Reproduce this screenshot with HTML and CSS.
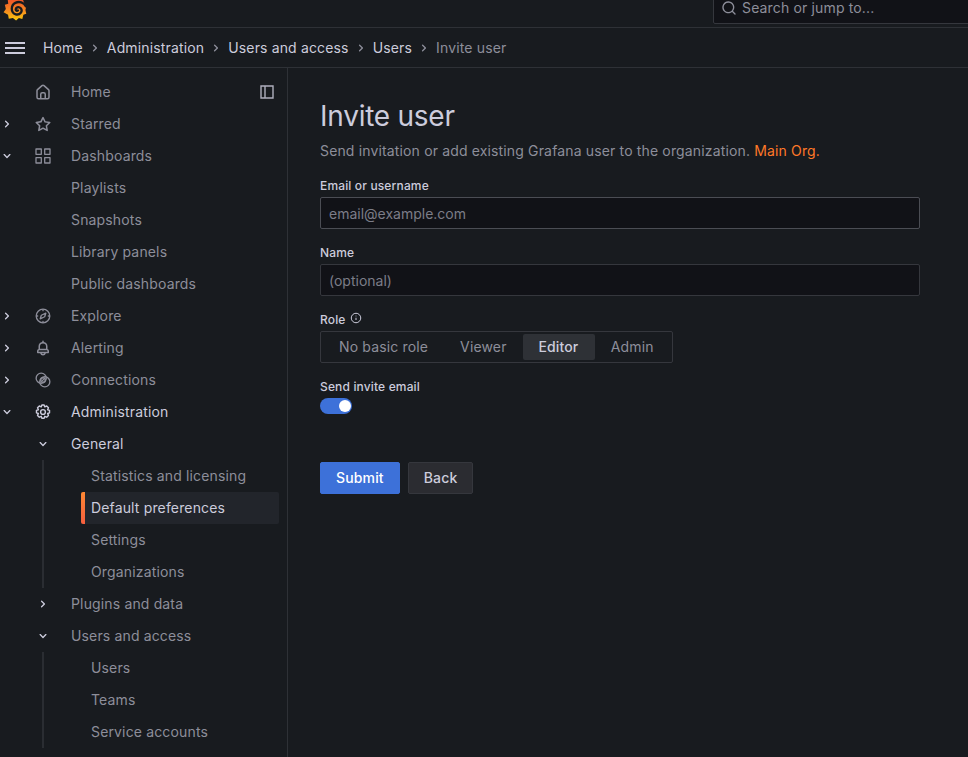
FILE: index.html
```html
<!DOCTYPE html>
<html lang="en">
<head>
<meta charset="utf-8">
<title>Invite user</title>
<link rel="stylesheet" href="styles.css">
</head>
<body>
<svg class="sprite" aria-hidden="true">
  <symbol id="right" viewBox="0 0 24 24"><path d="M14.83,11.29,10.59,7.05a1,1,0,0,0-1.42,0,1,1,0,0,0,0,1.41L12.71,12,9.17,15.54a1,1,0,0,0,0,1.41,1,1,0,0,0,.71.29,1,1,0,0,0,.71-.29l4.24-4.24A1,1,0,0,0,14.83,11.29Z"/></symbol>
  <symbol id="down" viewBox="0 0 24 24"><path d="M17,9.17a1,1,0,0,0-1.41,0L12,12.71,8.46,9.17a1,1,0,0,0-1.41,0,1,1,0,0,0,0,1.42l4.24,4.24a1,1,0,0,0,1.42,0L17,10.59A1,1,0,0,0,17,9.17Z"/></symbol>
  <symbol id="home" viewBox="0 0 24 24"><path d="M20,8h0L14,2.74a3,3,0,0,0-4,0L4,8a3,3,0,0,0-1,2.26V19a3,3,0,0,0,3,3H18a3,3,0,0,0,3-3V10.25A3,3,0,0,0,20,8ZM14,20H10V15a1,1,0,0,1,1-1h2a1,1,0,0,1,1,1Zm5-1a1,1,0,0,1-1,1H16V15a3,3,0,0,0-3-3H11a3,3,0,0,0-3,3v5H6a1,1,0,0,1-1-1V10.25a1,1,0,0,1,.34-.75l6-5.25a1,1,0,0,1,1.32,0l6,5.25a1,1,0,0,1,.34.75Z"/></symbol>
  <symbol id="star" viewBox="0 0 24 24"><path d="M22,9.67A1,1,0,0,0,21.14,9l-5.69-.83L12.9,3a1,1,0,0,0-1.8,0L8.55,8.16,2.86,9a1,1,0,0,0-.81.68,1,1,0,0,0,.25,1l4.13,4-1,5.68A1,1,0,0,0,6.9,21.44L12,18.77l5.1,2.67a.93.93,0,0,0,.46.12,1,1,0,0,0,.59-.19,1,1,0,0,0,.4-1l-1-5.68,4.13-4A1,1,0,0,0,22,9.67Zm-6.15,4a1,1,0,0,0-.29.88l.72,4.2-3.76-2a1.06,1.06,0,0,0-.94,0l-3.76,2,.72-4.2a1,1,0,0,0-.29-.88l-3-3,4.21-.61a1,1,0,0,0,.76-.55L12,5.7l1.88,3.82a1,1,0,0,0,.76.55l4.21.61Z"/></symbol>
  <symbol id="apps" viewBox="0 0 16 16"><path fill="none" stroke="currentColor" stroke-width="1.3" stroke-linejoin="round" d="M1 1h5.300v5.300H1zM9.700 1H15v5.300H9.700zM1 9.700h5.300V15H1zM9.700 9.700H15V15H9.700z"/></symbol>
  <symbol id="compass" viewBox="0 0 24 24"><g fill="none" stroke="currentColor" stroke-width="2" stroke-linecap="round" stroke-linejoin="round"><circle cx="12" cy="12" r="10.2"/><path d="M16.2 7.8l-1.7 5.3-6.7 3.1 1.7-5.3zM12 2.5v1.5M12 20v1.5M2.5 12H4M20 12h1.5"/></g></symbol>
  <symbol id="bell" viewBox="0 0 24 24"><path d="M18,13.18V10a6,6,0,0,0-5-5.91V3a1,1,0,0,0-2,0V4.09A6,6,0,0,0,6,10v3.18A3,3,0,0,0,4,16v2a1,1,0,0,0,1,1H8.14a4,4,0,0,0,7.72,0H19a1,1,0,0,0,1-1V16A3,3,0,0,0,18,13.18ZM8,10a4,4,0,0,1,8,0v3H8Zm4,10a2,2,0,0,1-1.72-1h3.44A2,2,0,0,1,12,20Zm6-3H6V16a1,1,0,0,1,1-1H17a1,1,0,0,1,1,1Z"/></symbol>
  <symbol id="links" viewBox="0 0 24 24"><g fill="none" stroke="currentColor" stroke-width="2"><circle cx="9.300" cy="9.300" r="7.600"/><circle cx="14.700" cy="14.700" r="7.600"/><circle cx="12" cy="12" r="3.400"/><path d="M10.300 13.700l3.400-3.400"/></g></symbol>
  <symbol id="cog" viewBox="0 0 24 24"><g fill="none" stroke="currentColor" stroke-width="2.1" stroke-linejoin="round"><path d="M10.3 1.500h3.4l.9 2.800 2.900-1.300 2.700 2.700-1.300 2.900 2.900.9v3.800l-2.900.9 1.300 2.900-2.700 2.700-2.900-1.300-.9 2.900h-3.400l-.9-2.900-2.900 1.300-2.700-2.700 1.300-2.900-2.900-.9v-3.800l2.900-.9-1.300-2.900 2.700-2.700 2.900 1.300z"/><circle cx="12" cy="12" r="3.6"/></g></symbol>
</svg>
<header class="topbar">
  <svg class="logo" viewBox="0 0 24 24">
    <defs><linearGradient id="flame" x1="0" y1="0" x2="0" y2="1"><stop offset="0.2" stop-color="#f05a28"/><stop offset="0.6" stop-color="#f58a20"/><stop offset="1" stop-color="#fbca0a"/></linearGradient></defs>
    <path fill="url(#flame)" d="M12 0l3 2 4.500 0 1.500 4 2.300 4-.8 3.500.8 3.500-2.800 1-1 4-3.300-.8-2.700 2.300-3-2.300-4 .7-.7-4-4.300-2.400 2.200-3-1-4L6 7.500l-.5-4L9.300 3z"/>
    <path class="swirl" d="M23 10C21 6 16.500 4.800 12.800 6.600C8.200 9 8.200 16 13.200 17.600C17.500 18.600 20.200 14.500 18 11.800C16 9.600 12.600 11 13.300 13.500C13.700 14.400 14.700 14.400 15.300 13.900"/>
  </svg>
  <div class="search">
    <svg class="icon" viewBox="0 0 24 24"><path d="M21.71,20.29,18,16.61A9,9,0,1,0,16.61,18l3.68,3.68a1,1,0,0,0,1.42,0A1,1,0,0,0,21.71,20.29ZM11,18a7,7,0,1,1,7-7A7,7,0,0,1,11,18Z"/></svg>
    <span>Search or jump to...</span>
  </div>
</header>
<div class="crumbbar">
  <button class="burger" aria-label="Menu"><i></i><i></i><i></i></button>
  <nav class="crumbs">
    <a>Home</a><svg class="icon"><use href="#right"/></svg>
    <a>Administration</a><svg class="icon"><use href="#right"/></svg>
    <a>Users and access</a><svg class="icon"><use href="#right"/></svg>
    <a>Users</a><svg class="icon"><use href="#right"/></svg>
    <span>Invite user</span>
  </nav>
</div>
<div class="body">
  <nav class="side">
    <div class="row"><span class="tw"></span><svg class="icon large"><use href="#home"/></svg><a>Home</a>
      <svg class="dock" viewBox="0 0 14 14"><path d="M1 1h12v12H1zM5 1v12"/></svg></div>
    <div class="row"><svg class="tw"><use href="#right"/></svg><svg class="icon large"><use href="#star"/></svg><a>Starred</a></div>
    <div class="row"><svg class="tw"><use href="#down"/></svg><svg class="icon"><use href="#apps"/></svg><a>Dashboards</a></div>
    <div class="row sub"><a>Playlists</a></div>
    <div class="row sub"><a>Snapshots</a></div>
    <div class="row sub"><a>Library panels</a></div>
    <div class="row sub"><a>Public dashboards</a></div>
    <div class="row"><svg class="tw"><use href="#right"/></svg><svg class="icon"><use href="#compass"/></svg><a>Explore</a></div>
    <div class="row"><svg class="tw"><use href="#right"/></svg><svg class="icon large"><use href="#bell"/></svg><a>Alerting</a></div>
    <div class="row"><svg class="tw"><use href="#right"/></svg><svg class="icon"><use href="#links"/></svg><a>Connections</a></div>
    <div class="row on"><svg class="tw"><use href="#down"/></svg><svg class="icon"><use href="#cog"/></svg><a>Administration</a></div>
    <div class="row on"><span class="tw"></span><svg class="icon mark"><use href="#down"/></svg><a>General</a></div>
    <div class="group">
      <div class="leaf"><a>Statistics and licensing</a></div>
      <div class="leaf current"><a>Default preferences</a></div>
      <div class="leaf"><a>Settings</a></div>
      <div class="leaf"><a>Organizations</a></div>
    </div>
    <div class="row"><span class="tw"></span><svg class="icon mark"><use href="#right"/></svg><a>Plugins and data</a></div>
    <div class="row"><span class="tw"></span><svg class="icon mark"><use href="#down"/></svg><a>Users and access</a></div>
    <div class="group">
      <div class="leaf"><a>Users</a></div>
      <div class="leaf"><a>Teams</a></div>
      <div class="leaf"><a>Service accounts</a></div>
    </div>
  </nav>
  <main>
    <h1>Invite user</h1>
    <p class="lead">Send invitation or add existing Grafana user to the organization. <a class="org">Main Org.</a></p>
    <form>
      <div class="field"><label for="login">Email or username</label><input id="login" class="focusable" placeholder="email@example.com"></div>
      <div class="field"><label for="name">Name</label><input id="name" placeholder="(optional)"></div>
      <div class="field">
        <label>Role <svg class="info" viewBox="0 0 24 24"><circle cx="12" cy="12" r="9.500"/><path d="M12 11.500v4.500M12 7.300v1.400"/></svg></label>
        <div class="radios"><span>No basic role</span><span>Viewer</span><span class="picked">Editor</span><span>Admin</span></div>
      </div>
      <div class="field"><label>Send invite email</label><div class="switch"><i></i></div></div>
      <div class="buttons"><button type="button" class="btn primary">Submit</button><button type="button" class="btn">Back</button></div>
    </form>
  </main>
</div>
</body>
</html>
```
FILE: styles.css
```css
* { box-sizing: border-box; }
html, body { height: 100%; }
body {
  margin: 0;
  overflow: hidden;
  display: flex;
  flex-direction: column;
  background: #181b1f;
  color: #ccccdc;
  font: 400 14px/22px Inter, "Liberation Sans", sans-serif;
  letter-spacing: 0.15px;
}
.sprite { display: none; }
.icon { width: 16px; height: 16px; fill: currentColor; flex: none; }
.icon.large { width: 18px; height: 18px; margin: 0 -1px; }
.topbar {
  height: 28px;
  flex: none;
  display: flex;
  justify-content: space-between;
  align-items: flex-end;
  border-bottom: 1px solid #2e3136;
  overflow: hidden;
}
.logo { width: 25px; height: 25px; margin: 0 0 6px 2px; flex: none; }
.swirl { fill: none; stroke: #181b1f; stroke-width: 2.2; stroke-linecap: round; }
.search {
  width: 265px;
  height: 32px;
  margin: 0 -10px 3px 0;
  padding: 0 8px 0 7px;
  display: flex;
  align-items: center;
  gap: 5px;
  background: #111217;
  border: 1px solid #35373d;
  border-radius: 2px;
  color: #8d8e9a;
}
.crumbbar {
  height: 40px;
  flex: none;
  display: flex;
  align-items: center;
  border-bottom: 1px solid #2e3136;
}
.burger {
  width: 20px;
  margin: 0 18px 0 5px;
  padding: 0;
  border: 0;
  background: none;
  display: grid;
  gap: 3px;
}
.burger i { height: 2px; background: #ccccdc; }
.crumbs { display: flex; align-items: center; }
.crumbs .icon { margin: 0 4px; color: #8d8e9a; }
.crumbs span { color: #8d8e9a; }
.body { flex: 1; min-height: 0; display: flex; }
.side {
  width: 288px;
  flex: none;
  padding: 8px 8px 0 0;
  border-right: 1px solid #2e3136;
  color: #8d8e9a;
}
.row { height: 32px; display: flex; align-items: center; }
.row .tw { width: 16px; height: 16px; margin: 0 20px 0 -1px; flex: none; fill: #ccccdc; }
.row a { margin-left: 20px; }
.row.sub a { margin-left: 71px; }
.row.on, .mark { color: #ccccdc; }
.dock { width: 14px; height: 14px; margin: 0 5px 0 auto; fill: none; stroke: #aeafbd; stroke-width: 1.4; }
.group { margin-left: 42px; border-left: 2px solid #2a2d32; }
.leaf { height: 32px; margin-left: 37px; padding-left: 10px; display: flex; align-items: center; }
.leaf.current {
  color: #ccccdc;
  border-radius: 2px;
  background: linear-gradient(#ff8833, #f55f3e) left / 4px 100% no-repeat #22252b;
}
main { flex: 1; padding: 32px 48px 0 32px; }
h1 { margin: 0 0 8px; font-size: 28px; line-height: 32px; font-weight: 400; letter-spacing: -0.25px; }
.lead { margin: 0 0 16px; color: #8d8e9a; }
.org { color: #ff7828; }
.field { margin-bottom: 16px; }
label { display: block; font-size: 12px; line-height: 15px; font-weight: 500; margin-bottom: 4px; }
input {
  display: block;
  width: 100%;
  height: 32px;
  padding: 0 8px;
  background: #111217;
  border: 1px solid #35373d;
  border-radius: 2px;
  font: inherit;
  letter-spacing: 0;
  color: #ccccdc;
}
input.focusable { border-color: #4b4d54; }
input::placeholder { color: #7c7d88; opacity: 1; }
.info { width: 12px; height: 12px; margin: -1px 0 0 1px; vertical-align: 0; fill: none; stroke: #ccccdc; stroke-width: 2; }
.radios {
  width: 353px;
  height: 32px;
  padding: 2px;
  display: flex;
  border: 1px solid #35373d;
  border-radius: 2px;
  line-height: 26px;
  color: #8d8e9a;
}
.radios span { padding: 0 16px; white-space: nowrap; }
.radios .picked { background: #2e3136; color: #ccccdc; border-radius: 2px; font-weight: 500; padding: 0 16.3px 0 15.8px; }
.switch { width: 32px; height: 16px; padding: 2px 1px; border-radius: 8px; background: #3d71d9; display: flex; justify-content: flex-end; }
.switch i { width: 12px; height: 12px; border-radius: 50%; background: #fff; }
.buttons { display: flex; gap: 8px; margin-top: 48px; }
.btn {
  height: 32px;
  padding: 0 15px;
  border: 1px solid #35373d;
  border-radius: 2px;
  background: #2b2c31;
  color: #ccccdc;
  font: inherit;
  font-weight: 500;
  letter-spacing: inherit;
}
.primary { background: #3d71d9; border-color: #3d71d9; color: #fff; }
```
